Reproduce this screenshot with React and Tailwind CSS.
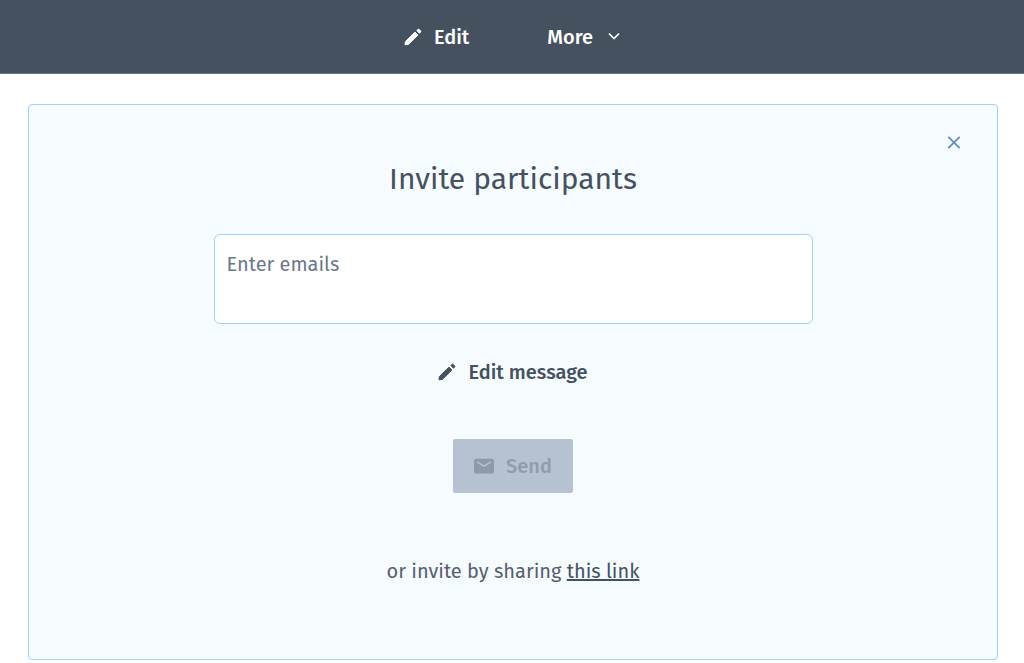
import { useState } from "react";

function PencilIcon() {
  return (
    <svg
      viewBox="0 0 18 18"
      className="w-[18px] h-[18px] shrink-0"
      fill="currentColor"
      stroke="currentColor"
      strokeWidth="1"
      strokeLinejoin="round"
      aria-hidden="true"
    >
      <path d="M1 16.8 L1.4 13.5 L11 4.1 L13.9 7 L4.4 16.4 Z" />
      <path d="M12.8 2.5 L13.8 1.5 Q14.6 0.8 15.4 1.5 L16.5 2.6 Q17.2 3.4 16.5 4.2 L15.5 5.2 Z" />
    </svg>
  );
}

function ChevronIcon() {
  return (
    <svg viewBox="0 0 12 12" className="w-3 h-3 shrink-0" fill="none" stroke="currentColor" strokeWidth="1.6" aria-hidden="true">
      <path d="M1 2.5 L6 7.5 L11 2.5" />
    </svg>
  );
}

function MailIcon() {
  return (
    <svg viewBox="0 0 20 16" className="w-5 h-4 shrink-0" aria-hidden="true">
      <rect x="0" y="0.8" width="20" height="14.8" rx="2" fill="#8f99aa" />
      <path d="M3 3.8 L10 8.2 L17 3.8" fill="none" stroke="#b6c2d2" strokeWidth="1.5" />
    </svg>
  );
}

function App() {
  const [emails, setEmails] = useState("");
  const [open, setOpen] = useState(true);

  return (
    <div className="font-['Fira_Sans','Noto_Sans',sans-serif] text-[#455160] bg-white">
      {/* Top bar */}
      <header className="flex items-center justify-center gap-[78px] h-[74px] bg-[#46515f] border-b border-[#6d7784] text-white text-xl font-medium">
        <button type="button" className="flex items-center gap-3">
          <PencilIcon />
          Edit
        </button>
        <button type="button" className="flex items-center gap-[15px]">
          More
          <ChevronIcon />
        </button>
      </header>

      {/* Invite panel */}
      <main className="pt-[30px] pb-1 pl-7 pr-[26px]">
        {open && (
          <section className="relative flex flex-col items-center pt-[54px] pb-[74px] px-6 bg-[#f5fbff] border border-[#a3cffa] rounded">
            <button
              type="button"
              aria-label="Close"
              onClick={() => setOpen(false)}
              className="absolute top-[31px] right-9 text-[#668fbd]"
            >
              <svg viewBox="0 0 14 14" className="block w-3.5 h-3.5" fill="none" stroke="currentColor" strokeWidth="1.9" aria-hidden="true">
                <path d="M1.3 0.8 L12.7 12.2 M12.7 0.8 L1.3 12.2" />
              </svg>
            </button>

            <h1 className="text-[30px] leading-10">Invite participants</h1>

            <textarea
              aria-label="Enter emails"
              placeholder="Enter emails"
              value={emails}
              onChange={(e) => setEmails(e.target.value)}
              className="block mt-[35px] w-full max-w-[599px] h-[90px] px-3 py-[15px] bg-white border border-[#a3cffa] rounded-md resize-none text-xl placeholder-[#6b778a] focus:outline-none"
            />

            <button type="button" className="flex items-center gap-3 mt-[34px] text-xl font-medium">
              <PencilIcon />
              Edit message
            </button>

            <button
              type="button"
              disabled
              className="flex items-center justify-center gap-3 mt-[53px] w-[120px] h-[54px] bg-[#b6c2d2] rounded-xs text-[#919bac] text-xl font-medium"
            >
              <MailIcon />
              Send
            </button>

            <p className="mt-16 text-xl text-[#556070]">
              or invite by sharing{" "}
              <a href="#invite" className="text-[#455160] underline">
                this link
              </a>
            </p>
          </section>
        )}
      </main>
    </div>
  );
}

export default App;
